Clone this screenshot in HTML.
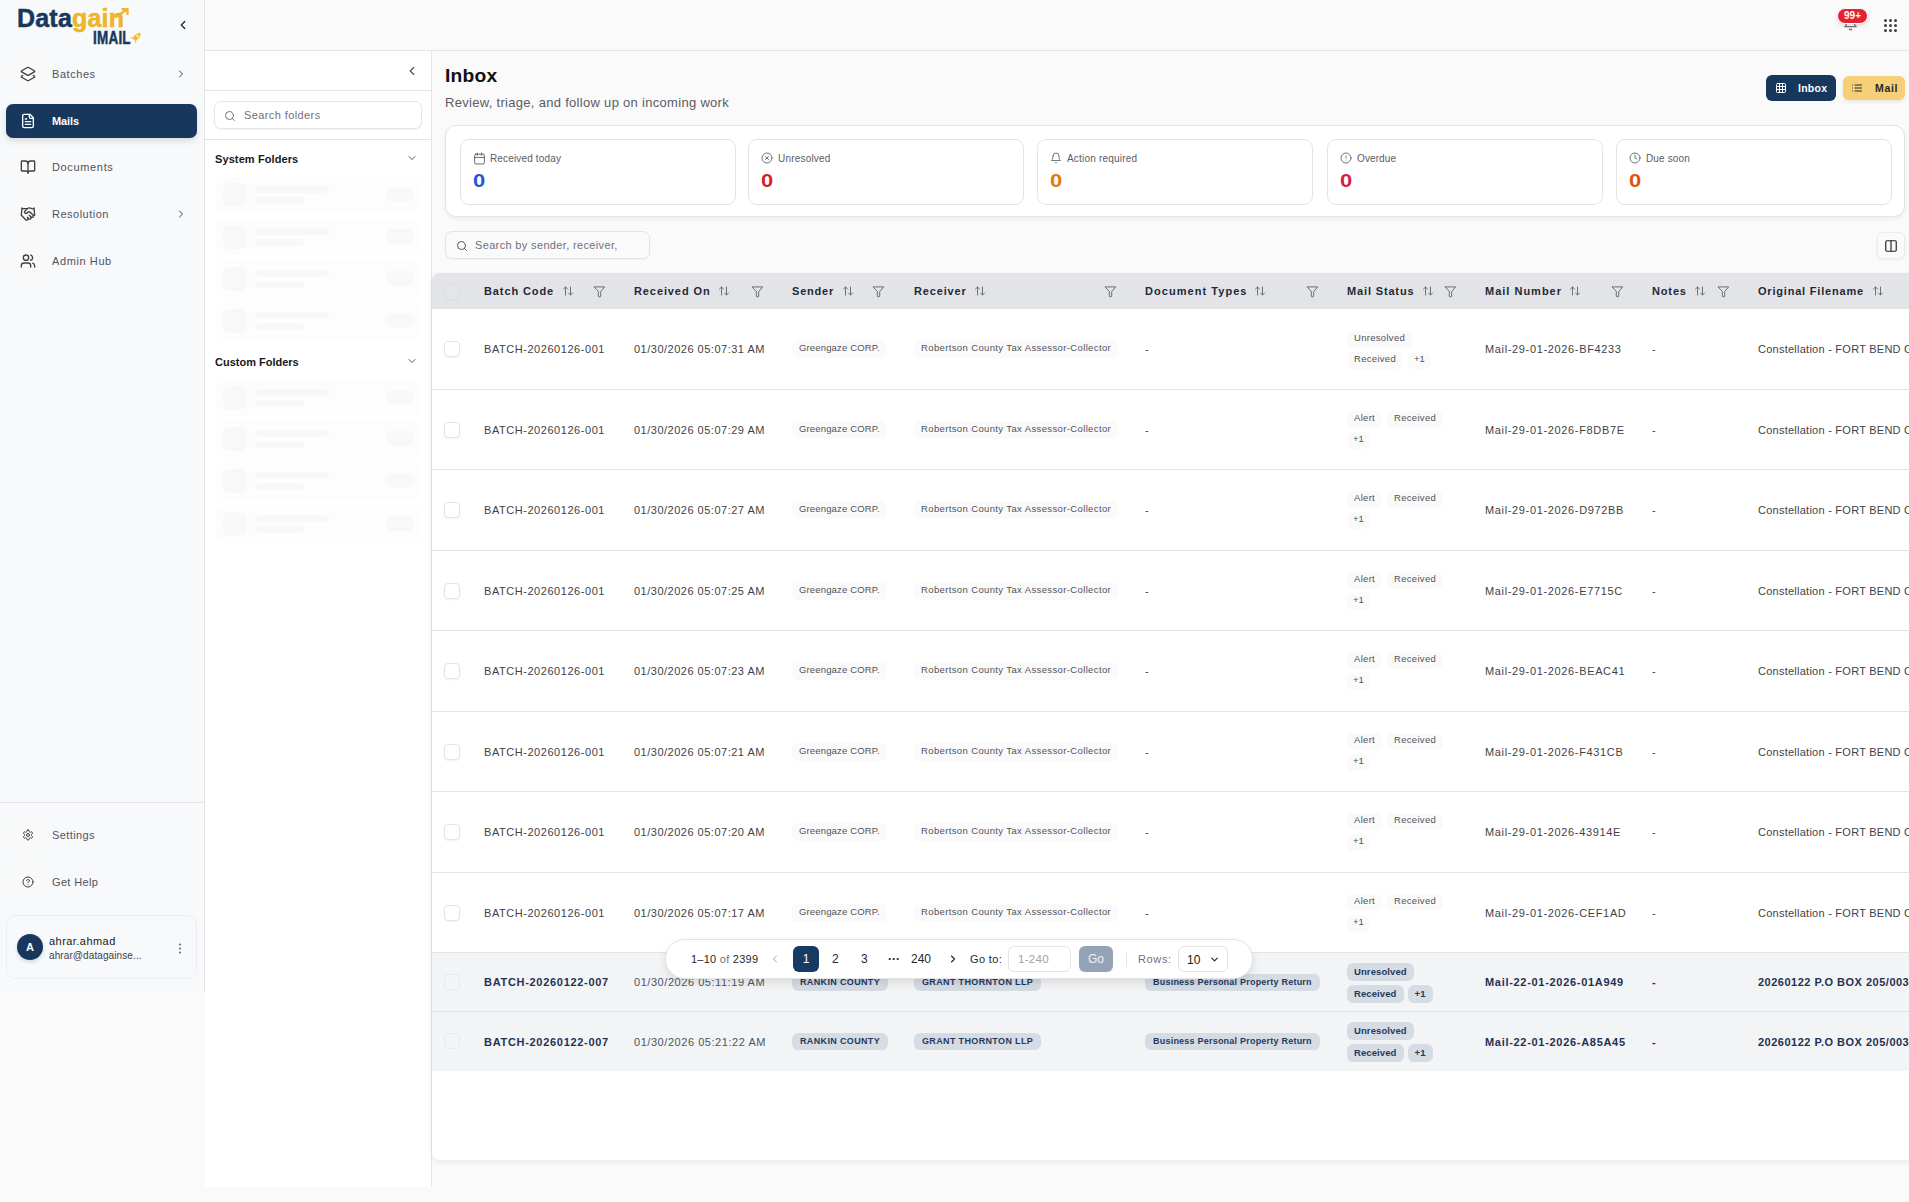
<!DOCTYPE html>
<html><head><meta charset="utf-8">
<style>
*{box-sizing:border-box;margin:0;padding:0}
html,body{width:1909px;height:1202px;overflow:hidden;background:#fafafa;font-family:"Liberation Sans",sans-serif;color:#111827}
.abs{position:absolute}
svg.i{fill:none;stroke:currentColor;stroke-width:2;stroke-linecap:round;stroke-linejoin:round;display:block}
/* sidebar */
#sb{position:absolute;left:0;top:0;width:205px;height:992px;background:#f8f9fb;border-right:1px solid #e4e4e7}
.nav{position:absolute;left:6px;width:191px;height:34px;border-radius:7px;color:#52525b;font-size:11px}
.nav .ic{position:absolute;left:8px;top:3px;width:28px;height:28px;border-radius:7px;background:#f9f9f7;color:#3f3f46}
.nav .ic svg{position:absolute;left:6px;top:6px}
.nav .t{position:absolute;left:46px;top:10px;line-height:14px}
.nav .chev{position:absolute;left:169px;top:11px;color:#3f3f46}
.nav.act{background:#17375c;color:#fff;box-shadow:0 3px 6px rgba(0,0,0,.12)}
.nav.act .ic{background:transparent;color:#fff}
.nav.act .t{font-weight:bold}
/* header */
#hdr{position:absolute;left:205px;top:0;width:1704px;height:51px;border-bottom:1px solid #e4e4e7;background:#fafafa}
/* folder panel */
#fp{position:absolute;left:205px;top:51px;width:227px;height:1136px;background:#fff;border-right:1px solid #e4e4e7}
.sk{position:absolute;left:10px;width:206px;height:36px;border-radius:9px;background:#fdfdfd}
.sk i{position:absolute;display:block;background:#f8f8f9}
.sk .a{left:8px;top:6px;width:24px;height:24px;border-radius:7px}
.sk .b{left:40px;top:9px;width:74px;height:7px;border-radius:4px}
.sk .c{left:40px;top:20px;width:49px;height:7px;border-radius:4px}
.sk .d{left:171px;top:10px;width:28px;height:15px;border-radius:8px}
/* stats */
.card{position:absolute;top:139px;width:276px;height:66px;border:1px solid #e4e4e7;border-radius:9px;background:#fff}
.card .lb{position:absolute;left:29px;top:13px;font-size:10px;color:#5b5b63;line-height:12px}
.card svg{position:absolute;left:12px;top:12px;color:#5b5b63;stroke-width:1.7}
.card .v{position:absolute;left:12px;top:30px;font-size:18px;font-weight:bold;line-height:22px;transform:scaleX(1.22);transform-origin:left}
/* table */
#tc{position:absolute;left:432px;top:273px;width:1600px;height:887px;background:#fff;border-radius:8px;box-shadow:0 2px 6px rgba(0,0,0,.08)}
#th{position:absolute;left:0;top:0;width:1600px;height:36px;background:#e3e4e7;border-radius:8px 8px 0 0}
.hc{position:absolute;top:0;height:36px}
.hc .t{position:absolute;left:16px;top:12px;font-size:11px;font-weight:bold;color:#1f2937;letter-spacing:.9px;line-height:13px;white-space:nowrap}
.hc svg{position:absolute;top:12px;color:#52525b}
.row{position:absolute;left:0;width:1600px;border-bottom:1px solid #e4e4e7}
.cell{position:absolute;top:0;height:100%;display:flex;align-items:center;font-size:11px;letter-spacing:.55px;color:#3f3f46;white-space:nowrap}
.cb{position:absolute;left:12px;width:16px;height:16px;border:1px solid #e4e4e7;border-radius:4px;background:#fff;box-shadow:0 1px 2px rgba(0,0,0,.06)}
.bg1{font-size:9.5px;letter-spacing:.25px;color:#52525b;background:#fafafa;border-radius:6px;padding:0 7px;height:18px;line-height:16px;display:inline-block}
.st{position:absolute;display:flex;flex-wrap:wrap;gap:4px 5px;width:110px;letter-spacing:.3px}
.bd{font-size:9.5px;color:#52525b;background:#fafafa;border-radius:6px;padding:0 7px;height:17px;line-height:14px}
.row.hl{background:#f3f4f6}
.hl .cb{background:transparent;box-shadow:none;border-color:#e8eaee}
.hl .cell{color:#4b5563}
.hl .nv{color:#1f3252;font-weight:bold}
.hl .cell{top:0}
.bg2{font-size:9px;letter-spacing:.35px;color:#1e3a5f;font-weight:bold;background:#d6dce4;border-radius:6px;padding:0 8px;height:17px;line-height:17px;display:inline-block}
.bd2{font-size:9.5px;letter-spacing:.1px;color:#1e3a5f;font-weight:bold;background:#d6dce4;border-radius:6px;padding:0 7px;height:18px;line-height:18px}
</style></head>
<body>
<!-- SIDEBAR -->
<div id="sb">
  <div class="abs" style="left:17px;top:5px;font-size:25px;font-weight:bold;letter-spacing:0.2px;line-height:26px;color:#17375c;-webkit-text-stroke:.5px #17375c">Data<span style="color:#f0b429;-webkit-text-stroke:.5px #f0b429">gain</span></div>
  <svg class="abs" style="left:112px;top:7px" width="18" height="12" viewBox="0 0 18 12"><path d="M3 10.5 L15 2.5 M9.5 2.2 H15.5 V8" fill="none" stroke="#f0b429" stroke-width="2.2" stroke-linecap="butt" stroke-linejoin="miter"/></svg>
  <svg class="abs" style="left:128px;top:30px" width="16" height="15" viewBox="0 0 16 15"><g transform="rotate(45 8 7.5)"><path d="M8 1 C10.5 3 10.8 7 10 10.5 H6 C5.2 7 5.5 3 8 1Z" fill="#f2b92e" stroke="#f8e3a6" stroke-width=".8"/><path d="M6 9 L4 12 L6.2 11.2Z M10 9 L12 12 L9.8 11.2Z" fill="#f2b92e"/><circle cx="8" cy="5.5" r="1.1" fill="#fff6d8"/></g></svg>
  <div class="abs" style="left:93px;top:30px;font-size:17.5px;font-weight:bold;line-height:17px;color:#17375c;transform:scaleX(.77);transform-origin:left;-webkit-text-stroke:.5px #17375c;letter-spacing:.3px">IMAIL</div>
  <svg class="i abs" style="left:176px;top:18px;color:#27272a;stroke-width:2.2" width="14" height="14" viewBox="0 0 24 24"><path d="m15 18-6-6 6-6"/></svg>

  <div class="nav" style="top:57px"><div class="ic"><svg class="i" width="16" height="16" viewBox="0 0 24 24"><path d="M13 13.74a2 2 0 0 1-2 0L2.5 8.87a1 1 0 0 1 0-1.74L11 2.26a2 2 0 0 1 2 0l8.5 4.87a1 1 0 0 1 0 1.74Z"/><path d="m20 14.285 1.5.845a1 1 0 0 1 0 1.74L13 21.74a2 2 0 0 1-2 0l-8.5-4.87a1 1 0 0 1 0-1.74l1.5-.845"/></svg></div><div class="t" style="letter-spacing:.55px">Batches</div><svg class="i chev" width="12" height="12" viewBox="0 0 24 24"><path d="m9 18 6-6-6-6"/></svg></div>
  <div class="nav act" style="top:104px"><div class="ic"><svg class="i" width="16" height="16" viewBox="0 0 24 24"><path d="M15 2H6a2 2 0 0 0-2 2v16a2 2 0 0 0 2 2h12a2 2 0 0 0 2-2V7Z"/><path d="M14 2v4a2 2 0 0 0 2 2h4"/><path d="M10 9H8"/><path d="M16 13H8"/><path d="M16 17H8"/></svg></div><div class="t" style="letter-spacing:-.1px">Mails</div></div>
  <div class="nav" style="top:150px"><div class="ic"><svg class="i" width="16" height="16" viewBox="0 0 24 24"><path d="M12 7v14"/><path d="M3 18a1 1 0 0 1-1-1V4a1 1 0 0 1 1-1h5a4 4 0 0 1 4 4 4 4 0 0 1 4-4h5a1 1 0 0 1 1 1v13a1 1 0 0 1-1 1h-6a3 3 0 0 0-3 3 3 3 0 0 0-3-3z"/></svg></div><div class="t" style="letter-spacing:.65px">Documents</div></div>
  <div class="nav" style="top:197px"><div class="ic"><svg class="i" width="16" height="16" viewBox="0 0 24 24"><path d="m11 17 2 2a1 1 0 1 0 3-3"/><path d="m14 14 2.5 2.5a1 1 0 1 0 3-3l-3.88-3.88a3 3 0 0 0-4.24 0l-.88.88a1 1 0 1 1-3-3l2.81-2.81a5.79 5.79 0 0 1 7.06-.87l.47.28a2 2 0 0 0 1.42.25L21 4"/><path d="m21 3 1 11h-2"/><path d="M3 3 2 14l6.5 6.5a1 1 0 1 0 3-3"/><path d="M3 4h8"/></svg></div><div class="t" style="letter-spacing:.5px">Resolution</div><svg class="i chev" width="12" height="12" viewBox="0 0 24 24"><path d="m9 18 6-6-6-6"/></svg></div>
  <div class="nav" style="top:244px"><div class="ic"><svg class="i" width="16" height="16" viewBox="0 0 24 24"><path d="M16 21v-2a4 4 0 0 0-4-4H6a4 4 0 0 0-4 4v2"/><circle cx="9" cy="7" r="4"/><path d="M22 21v-2a4 4 0 0 0-3-3.870"/><path d="M16 3.130a4 4 0 0 1 0 7.750"/></svg></div><div class="t" style="letter-spacing:.6px">Admin Hub</div></div>

  <div class="abs" style="left:0;top:802px;width:204px;height:1px;background:#e4e4e7"></div>
  <div class="nav" style="top:818px"><div class="ic"><svg class="i" width="12" height="12" viewBox="0 0 24 24" style="left:8px;top:8px"><path d="M12.22 2h-.44a2 2 0 0 0-2 2v.18a2 2 0 0 1-1 1.73l-.43.25a2 2 0 0 1-2 0l-.15-.08a2 2 0 0 0-2.73.73l-.22.38a2 2 0 0 0 .73 2.73l.15.1a2 2 0 0 1 1 1.72v.51a2 2 0 0 1-1 1.74l-.15.09a2 2 0 0 0-.73 2.73l.22.38a2 2 0 0 0 2.730.73l.15-.08a2 2 0 0 1 2 0l.43.25a2 2 0 0 1 1 1.73V20a2 2 0 0 0 2 2h.44a2 2 0 0 0 2-2v-.18a2 2 0 0 1 1-1.73l.43-.25a2 2 0 0 1 2 0l.15.08a2 2 0 0 0 2.73-.73l.22-.39a2 2 0 0 0-.73-2.73l-.15-.08a2 2 0 0 1-1-1.74v-.5a2 2 0 0 1 1-1.74l.15-.09a2 2 0 0 0 .73-2.73l-.22-.38a2 2 0 0 0-2.73-.73l-.15.08a2 2 0 0 1-2 0l-.43-.25a2 2 0 0 1-1-1.73V4a2 2 0 0 0-2-2z"/><circle cx="12" cy="12" r="3"/></svg></div><div class="t" style="letter-spacing:.4px">Settings</div></div>
  <div class="nav" style="top:865px"><div class="ic"><svg class="i" width="12" height="12" viewBox="0 0 24 24" style="left:8px;top:8px"><circle cx="12" cy="12" r="10"/><path d="M9.09 9a3 3 0 0 1 5.83 1c0 2-3 3-3 3"/><path d="M12 17h.01"/></svg></div><div class="t" style="letter-spacing:.35px">Get Help</div></div>

  <div class="abs" style="left:6px;top:915px;width:191px;height:64px;border:1px solid #eceef1;border-radius:9px;background:#f8f9fb">
    <div class="abs" style="left:10px;top:18px;width:26px;height:26px;border-radius:13px;background:#17375c;color:#fff;font-size:11px;font-weight:bold;text-align:center;line-height:26px;box-shadow:0 2px 4px rgba(0,0,0,.15)">A</div>
    <div class="abs" style="left:42px;top:19px;font-size:11px;letter-spacing:.45px;color:#18181b;line-height:13px">ahrar.ahmad</div>
    <div class="abs" style="left:42px;top:34px;font-size:10px;letter-spacing:.1px;color:#3f3f46;line-height:12px">ahrar@datagainse...</div>
    <svg class="abs" style="left:171px;top:27px" width="4" height="11" viewBox="0 0 4 11"><circle cx="2" cy="1.5" r="1.1" fill="#71717a"/><circle cx="2" cy="5.5" r="1.1" fill="#71717a"/><circle cx="2" cy="9.5" r="1.1" fill="#71717a"/></svg>
  </div>
</div>

<!-- HEADER -->
<div id="hdr"></div>
<svg class="i abs" style="left:1843px;top:16px;color:#71717a" width="15" height="15" viewBox="0 0 24 24"><path d="M6 8a6 6 0 0 1 12 0c0 7 3 9 3 9H3s3-2 3-9"/><path d="M10.3 21a1.94 1.94 0 0 0 3.4 0"/></svg>
<div class="abs" style="left:1837px;top:8px;width:31px;height:16px;border-radius:8px;background:#e5222f;border:1px solid #fafafa;color:#fff;font-size:10px;font-weight:bold;line-height:14px;text-align:center;box-shadow:0 2px 4px rgba(0,0,0,.12)">99+</div>
<svg class="abs" style="left:1884px;top:19px" width="13" height="13" viewBox="0 0 13 13"><g fill="#3f3f46"><circle cx="1.5" cy="1.5" r="1.5"/><circle cx="6.5" cy="1.5" r="1.5"/><circle cx="11.5" cy="1.5" r="1.5"/><circle cx="1.5" cy="6.5" r="1.5"/><circle cx="6.5" cy="6.5" r="1.5"/><circle cx="11.5" cy="6.5" r="1.5"/><circle cx="1.5" cy="11.5" r="1.5"/><circle cx="6.5" cy="11.5" r="1.5"/><circle cx="11.5" cy="11.5" r="1.5"/></g></svg>

<!-- FOLDER PANEL -->
<div id="fp">
  <svg class="i abs" style="left:200px;top:13px;color:#52525b" width="14" height="14" viewBox="0 0 24 24"><path d="m15 18-6-6 6-6"/></svg>
  <div class="abs" style="left:0;top:39px;width:226px;height:1px;background:#e4e4e7"></div>
  <div class="abs" style="left:9px;top:50px;width:208px;height:28px;border:1px solid #e4e4e7;border-radius:7px;background:#fff;box-shadow:0 1px 2px rgba(0,0,0,.05)">
    <svg class="i abs" style="left:9px;top:8px;color:#6b7280" width="12" height="12" viewBox="0 0 24 24"><circle cx="11" cy="11" r="8"/><path d="m21 21-4.3-4.3"/></svg>
    <div class="abs" style="left:29px;top:7px;font-size:11px;letter-spacing:.4px;color:#71717a;line-height:13px">Search folders</div>
  </div>
  <div class="abs" style="left:0;top:88px;width:226px;height:1px;background:#e4e4e7"></div>
  <div class="abs" style="left:10px;top:102px;font-size:11px;font-weight:bold;letter-spacing:.1px;color:#18181b;line-height:13px">System Folders</div>
  <svg class="i abs" style="left:201px;top:101px;color:#52525b" width="12" height="12" viewBox="0 0 24 24"><path d="m6 9 6 6 6-6"/></svg>
  <div class="sk" style="top:126px"><i class="a"></i><i class="b"></i><i class="c"></i><i class="d"></i></div>
  <div class="sk" style="top:168px"><i class="a"></i><i class="b"></i><i class="c"></i><i class="d"></i></div>
  <div class="sk" style="top:210px"><i class="a"></i><i class="b"></i><i class="c"></i><i class="d"></i></div>
  <div class="sk" style="top:252px"><i class="a"></i><i class="b"></i><i class="c"></i><i class="d"></i></div>
  <div class="abs" style="left:10px;top:305px;font-size:11px;font-weight:bold;color:#18181b;line-height:13px">Custom Folders</div>
  <svg class="i abs" style="left:201px;top:304px;color:#52525b" width="12" height="12" viewBox="0 0 24 24"><path d="m6 9 6 6 6-6"/></svg>
  <div class="sk" style="top:329px"><i class="a"></i><i class="b"></i><i class="c"></i><i class="d"></i></div>
  <div class="sk" style="top:370px"><i class="a"></i><i class="b"></i><i class="c"></i><i class="d"></i></div>
  <div class="sk" style="top:412px"><i class="a"></i><i class="b"></i><i class="c"></i><i class="d"></i></div>
  <div class="sk" style="top:455px"><i class="a"></i><i class="b"></i><i class="c"></i><i class="d"></i></div>
</div>

<!-- MAIN HEADER -->
<div class="abs" style="left:445px;top:65px;font-size:18px;font-weight:bold;letter-spacing:.2px;color:#111;line-height:22px;transform:scaleX(1.07);transform-origin:left">Inbox</div>
<div class="abs" style="left:445px;top:95px;font-size:13px;letter-spacing:.3px;color:#5b5b63;line-height:15px">Review, triage, and follow up on incoming work</div>

<div class="abs" style="left:1766px;top:75px;width:70px;height:26px;border-radius:6px;background:#17375c;color:#fff">
  <svg class="i abs" style="left:9px;top:7px" width="12" height="12" viewBox="0 0 24 24"><rect width="18" height="18" x="3" y="3" rx="2"/><path d="M3 9h18"/><path d="M3 15h18"/><path d="M9 3v18"/><path d="M15 3v18"/></svg>
  <div class="abs" style="left:32px;top:7px;font-size:10.5px;letter-spacing:.25px;font-weight:bold;line-height:13px">Inbox</div>
</div>
<div class="abs" style="left:1843px;top:76px;width:62px;height:24px;border-radius:6px;background:#f6cf76;color:#27272a;box-shadow:0 2px 4px rgba(0,0,0,.08)">
  <svg class="i abs" style="left:8px;top:6px" width="12" height="12" viewBox="0 0 24 24"><path d="M3 12h.01"/><path d="M3 18h.01"/><path d="M3 6h.01"/><path d="M8 12h13"/><path d="M8 18h13"/><path d="M8 6h13"/></svg>
  <div class="abs" style="left:32px;top:6px;font-size:10.5px;letter-spacing:.65px;font-weight:bold;line-height:13px">Mail</div>
</div>

<!-- STATS -->
<div class="abs" style="left:445px;top:125px;width:1460px;height:92px;background:#fff;border:1px solid #e4e4e7;border-radius:11px;box-shadow:0 2px 4px rgba(0,0,0,.05)"></div>
<div class="card" style="left:460px"><svg class="i" width="13" height="13" viewBox="0 0 24 24"><rect width="18" height="18" x="3" y="4" rx="2"/><path d="M16 2v4"/><path d="M8 2v4"/><path d="M3 10h18"/></svg><div class="lb" style="letter-spacing:.15px">Received today</div><div class="v" style="color:#2456d6">0</div></div>
<div class="card" style="left:748px"><svg class="i" width="12" height="12" viewBox="0 0 24 24"><circle cx="12" cy="12" r="10"/><path d="m15 9-6 6"/><path d="m9 9 6 6"/></svg><div class="lb" style="letter-spacing:.2px">Unresolved</div><div class="v" style="color:#d21f2a">0</div></div>
<div class="card" style="left:1037px"><svg class="i" width="12" height="12" viewBox="0 0 24 24"><path d="M6 8a6 6 0 0 1 12 0c0 7 3 9 3 9H3s3-2 3-9"/><path d="M10.3 21a1.94 1.94 0 0 0 3.4 0"/></svg><div class="lb" style="letter-spacing:.2px">Action required</div><div class="v" style="color:#dd7a0c">0</div></div>
<div class="card" style="left:1327px"><svg class="i" width="12" height="12" viewBox="0 0 24 24"><circle cx="12" cy="12" r="10"/><path d="M12 8v4"/><path d="M12 16h.01"/></svg><div class="lb" style="letter-spacing:.1px">Overdue</div><div class="v" style="color:#d21f45">0</div></div>
<div class="card" style="left:1616px"><svg class="i" width="12" height="12" viewBox="0 0 24 24"><circle cx="12" cy="12" r="10"/><path d="M12 6v6l4 2"/></svg><div class="lb" style="letter-spacing:.15px">Due soon</div><div class="v" style="color:#e0530e">0</div></div>

<!-- SEARCH -->
<div class="abs" style="left:445px;top:231px;width:205px;height:28px;border:1px solid #e4e4e7;border-radius:7px;background:#fafafa;box-shadow:0 1px 2px rgba(0,0,0,.04)">
  <svg class="i abs" style="left:10px;top:8px;color:#52525b" width="12" height="12" viewBox="0 0 24 24"><circle cx="11" cy="11" r="8"/><path d="m21 21-4.3-4.3"/></svg>
  <div class="abs" style="left:29px;top:7px;font-size:11px;letter-spacing:.35px;color:#71717a;line-height:13px">Search by sender, receiver,</div>
</div>
<div class="abs" style="left:1877px;top:232px;width:28px;height:27px;border:1px solid #ececec;border-radius:6px;background:#fafafa;box-shadow:0 1px 3px rgba(0,0,0,.06)">
  <svg class="i abs" style="left:6px;top:6px;color:#27272a" width="14" height="14" viewBox="0 0 24 24"><rect width="18" height="18" x="3" y="3" rx="2"/><path d="M12 3v18"/></svg>
</div>

<!-- TABLE -->
<div id="tc">
<div id="th"><div class="cb" style="top:11px;opacity:.35;border-color:#d4d4d8;background:#e4e7eb"></div><div class="hc" style="left:36px;width:150px"><div class="t" style="letter-spacing:0.9px">Batch Code</div></div><div class="hc" style="left:186px;width:158px"><div class="t" style="letter-spacing:0.9px">Received On</div></div><div class="hc" style="left:344px;width:122px"><div class="t" style="letter-spacing:0.8px">Sender</div></div><div class="hc" style="left:466px;width:231px"><div class="t" style="letter-spacing:0.85px">Receiver</div></div><div class="hc" style="left:697px;width:202px"><div class="t" style="letter-spacing:1.05px">Document Types</div></div><div class="hc" style="left:899px;width:138px"><div class="t" style="letter-spacing:0.85px">Mail Status</div></div><div class="hc" style="left:1037px;width:167px"><div class="t" style="letter-spacing:1.0px">Mail Number</div></div><div class="hc" style="left:1204px;width:106px"><div class="t" style="letter-spacing:0.85px">Notes</div></div><div class="hc" style="left:1310px;width:390px"><div class="t" style="letter-spacing:0.8px">Original Filename</div></div><svg class="i" width="12" height="12" viewBox="0 0 24 24" style="position:absolute;top:12px;color:#63636b;left:130px;stroke-width:1.8"><path d="m21 16-4 4-4-4"/><path d="M17 20V4"/><path d="m3 8 4-4 4 4"/><path d="M7 4v16"/></svg><svg class="i" width="12" height="12" viewBox="0 0 24 24" style="position:absolute;top:12px;color:#63636b;left:286px;stroke-width:1.8"><path d="m21 16-4 4-4-4"/><path d="M17 20V4"/><path d="m3 8 4-4 4 4"/><path d="M7 4v16"/></svg><svg class="i" width="12" height="12" viewBox="0 0 24 24" style="position:absolute;top:12px;color:#63636b;left:410px;stroke-width:1.8"><path d="m21 16-4 4-4-4"/><path d="M17 20V4"/><path d="m3 8 4-4 4 4"/><path d="M7 4v16"/></svg><svg class="i" width="12" height="12" viewBox="0 0 24 24" style="position:absolute;top:12px;color:#63636b;left:542px;stroke-width:1.8"><path d="m21 16-4 4-4-4"/><path d="M17 20V4"/><path d="m3 8 4-4 4 4"/><path d="M7 4v16"/></svg><svg class="i" width="12" height="12" viewBox="0 0 24 24" style="position:absolute;top:12px;color:#63636b;left:822px;stroke-width:1.8"><path d="m21 16-4 4-4-4"/><path d="M17 20V4"/><path d="m3 8 4-4 4 4"/><path d="M7 4v16"/></svg><svg class="i" width="12" height="12" viewBox="0 0 24 24" style="position:absolute;top:12px;color:#63636b;left:990px;stroke-width:1.8"><path d="m21 16-4 4-4-4"/><path d="M17 20V4"/><path d="m3 8 4-4 4 4"/><path d="M7 4v16"/></svg><svg class="i" width="12" height="12" viewBox="0 0 24 24" style="position:absolute;top:12px;color:#63636b;left:1137px;stroke-width:1.8"><path d="m21 16-4 4-4-4"/><path d="M17 20V4"/><path d="m3 8 4-4 4 4"/><path d="M7 4v16"/></svg><svg class="i" width="12" height="12" viewBox="0 0 24 24" style="position:absolute;top:12px;color:#63636b;left:1262px;stroke-width:1.8"><path d="m21 16-4 4-4-4"/><path d="M17 20V4"/><path d="m3 8 4-4 4 4"/><path d="M7 4v16"/></svg><svg class="i" width="12" height="12" viewBox="0 0 24 24" style="position:absolute;top:12px;color:#63636b;left:1440px;stroke-width:1.8"><path d="m21 16-4 4-4-4"/><path d="M17 20V4"/><path d="m3 8 4-4 4 4"/><path d="M7 4v16"/></svg><svg class="i" width="13" height="13" viewBox="0 0 24 24" style="position:absolute;top:12px;color:#63636b;left:161px;stroke-width:1.7"><path d="M2.5 3.5h19l-7.3 8.8v8.2a1.2 1.2 0 0 1-1.2 1.2h-2a1.2 1.2 0 0 1-1.2-1.2v-8.2z"/></svg><svg class="i" width="13" height="13" viewBox="0 0 24 24" style="position:absolute;top:12px;color:#63636b;left:319px;stroke-width:1.7"><path d="M2.5 3.5h19l-7.3 8.8v8.2a1.2 1.2 0 0 1-1.2 1.2h-2a1.2 1.2 0 0 1-1.2-1.2v-8.2z"/></svg><svg class="i" width="13" height="13" viewBox="0 0 24 24" style="position:absolute;top:12px;color:#63636b;left:440px;stroke-width:1.7"><path d="M2.5 3.5h19l-7.3 8.8v8.2a1.2 1.2 0 0 1-1.2 1.2h-2a1.2 1.2 0 0 1-1.2-1.2v-8.2z"/></svg><svg class="i" width="13" height="13" viewBox="0 0 24 24" style="position:absolute;top:12px;color:#63636b;left:672px;stroke-width:1.7"><path d="M2.5 3.5h19l-7.3 8.8v8.2a1.2 1.2 0 0 1-1.2 1.2h-2a1.2 1.2 0 0 1-1.2-1.2v-8.2z"/></svg><svg class="i" width="13" height="13" viewBox="0 0 24 24" style="position:absolute;top:12px;color:#63636b;left:874px;stroke-width:1.7"><path d="M2.5 3.5h19l-7.3 8.8v8.2a1.2 1.2 0 0 1-1.2 1.2h-2a1.2 1.2 0 0 1-1.2-1.2v-8.2z"/></svg><svg class="i" width="13" height="13" viewBox="0 0 24 24" style="position:absolute;top:12px;color:#63636b;left:1012px;stroke-width:1.7"><path d="M2.5 3.5h19l-7.3 8.8v8.2a1.2 1.2 0 0 1-1.2 1.2h-2a1.2 1.2 0 0 1-1.2-1.2v-8.2z"/></svg><svg class="i" width="13" height="13" viewBox="0 0 24 24" style="position:absolute;top:12px;color:#63636b;left:1179px;stroke-width:1.7"><path d="M2.5 3.5h19l-7.3 8.8v8.2a1.2 1.2 0 0 1-1.2 1.2h-2a1.2 1.2 0 0 1-1.2-1.2v-8.2z"/></svg><svg class="i" width="13" height="13" viewBox="0 0 24 24" style="position:absolute;top:12px;color:#63636b;left:1285px;stroke-width:1.7"><path d="M2.5 3.5h19l-7.3 8.8v8.2a1.2 1.2 0 0 1-1.2 1.2h-2a1.2 1.2 0 0 1-1.2-1.2v-8.2z"/></svg></div>
<div class="row" style="top:36px;height:81px"><div class="cb" style="top:32px"></div><div class="cell" style="left:52px;">BATCH-20260126-001</div><div class="cell" style="left:202px;letter-spacing:.5px">01/30/2026 05:07:31 AM</div><div class="cell" style="left:360px;"><span class="bg1" style="letter-spacing:.15px">Greengaze CORP.</span></div><div class="cell" style="left:482px;"><span class="bg1" style="letter-spacing:.37px">Robertson County Tax Assessor-Collector</span></div><div class="cell" style="left:713px;">-</div><div class="st" style="left:915px;top:22px;width:90px"><span class="bd">Unresolved</span><span class="bd">Received</span><span class="bd" style="padding:0 6px;letter-spacing:0">+1</span></div><div class="cell" style="left:1053px;letter-spacing:.65px">Mail-29-01-2026-BF4233</div><div class="cell" style="left:1220px;">-</div><div class="cell" style="left:1326px;letter-spacing:.25px">Constellation - FORT BEND COUNTY TAX OFFICE</div></div>
<div class="row" style="top:117px;height:80px"><div class="cb" style="top:32px"></div><div class="cell" style="left:52px;">BATCH-20260126-001</div><div class="cell" style="left:202px;letter-spacing:.5px">01/30/2026 05:07:29 AM</div><div class="cell" style="left:360px;"><span class="bg1" style="letter-spacing:.15px">Greengaze CORP.</span></div><div class="cell" style="left:482px;"><span class="bg1" style="letter-spacing:.37px">Robertson County Tax Assessor-Collector</span></div><div class="cell" style="left:713px;">-</div><div class="st" style="left:915px;top:21px;width:110px"><span class="bd">Alert</span><span class="bd">Received</span><span class="bd" style="padding:0 6px;letter-spacing:0">+1</span></div><div class="cell" style="left:1053px;letter-spacing:.65px">Mail-29-01-2026-F8DB7E</div><div class="cell" style="left:1220px;">-</div><div class="cell" style="left:1326px;letter-spacing:.25px">Constellation - FORT BEND COUNTY TAX OFFICE</div></div>
<div class="row" style="top:197px;height:81px"><div class="cb" style="top:32px"></div><div class="cell" style="left:52px;">BATCH-20260126-001</div><div class="cell" style="left:202px;letter-spacing:.5px">01/30/2026 05:07:27 AM</div><div class="cell" style="left:360px;"><span class="bg1" style="letter-spacing:.15px">Greengaze CORP.</span></div><div class="cell" style="left:482px;"><span class="bg1" style="letter-spacing:.37px">Robertson County Tax Assessor-Collector</span></div><div class="cell" style="left:713px;">-</div><div class="st" style="left:915px;top:21px;width:110px"><span class="bd">Alert</span><span class="bd">Received</span><span class="bd" style="padding:0 6px;letter-spacing:0">+1</span></div><div class="cell" style="left:1053px;letter-spacing:.65px">Mail-29-01-2026-D972BB</div><div class="cell" style="left:1220px;">-</div><div class="cell" style="left:1326px;letter-spacing:.25px">Constellation - FORT BEND COUNTY TAX OFFICE</div></div>
<div class="row" style="top:278px;height:80px"><div class="cb" style="top:32px"></div><div class="cell" style="left:52px;">BATCH-20260126-001</div><div class="cell" style="left:202px;letter-spacing:.5px">01/30/2026 05:07:25 AM</div><div class="cell" style="left:360px;"><span class="bg1" style="letter-spacing:.15px">Greengaze CORP.</span></div><div class="cell" style="left:482px;"><span class="bg1" style="letter-spacing:.37px">Robertson County Tax Assessor-Collector</span></div><div class="cell" style="left:713px;">-</div><div class="st" style="left:915px;top:21px;width:110px"><span class="bd">Alert</span><span class="bd">Received</span><span class="bd" style="padding:0 6px;letter-spacing:0">+1</span></div><div class="cell" style="left:1053px;letter-spacing:.65px">Mail-29-01-2026-E7715C</div><div class="cell" style="left:1220px;">-</div><div class="cell" style="left:1326px;letter-spacing:.25px">Constellation - FORT BEND COUNTY TAX OFFICE</div></div>
<div class="row" style="top:358px;height:81px"><div class="cb" style="top:32px"></div><div class="cell" style="left:52px;">BATCH-20260126-001</div><div class="cell" style="left:202px;letter-spacing:.5px">01/30/2026 05:07:23 AM</div><div class="cell" style="left:360px;"><span class="bg1" style="letter-spacing:.15px">Greengaze CORP.</span></div><div class="cell" style="left:482px;"><span class="bg1" style="letter-spacing:.37px">Robertson County Tax Assessor-Collector</span></div><div class="cell" style="left:713px;">-</div><div class="st" style="left:915px;top:21px;width:110px"><span class="bd">Alert</span><span class="bd">Received</span><span class="bd" style="padding:0 6px;letter-spacing:0">+1</span></div><div class="cell" style="left:1053px;letter-spacing:.65px">Mail-29-01-2026-BEAC41</div><div class="cell" style="left:1220px;">-</div><div class="cell" style="left:1326px;letter-spacing:.25px">Constellation - FORT BEND COUNTY TAX OFFICE</div></div>
<div class="row" style="top:439px;height:80px"><div class="cb" style="top:32px"></div><div class="cell" style="left:52px;">BATCH-20260126-001</div><div class="cell" style="left:202px;letter-spacing:.5px">01/30/2026 05:07:21 AM</div><div class="cell" style="left:360px;"><span class="bg1" style="letter-spacing:.15px">Greengaze CORP.</span></div><div class="cell" style="left:482px;"><span class="bg1" style="letter-spacing:.37px">Robertson County Tax Assessor-Collector</span></div><div class="cell" style="left:713px;">-</div><div class="st" style="left:915px;top:21px;width:110px"><span class="bd">Alert</span><span class="bd">Received</span><span class="bd" style="padding:0 6px;letter-spacing:0">+1</span></div><div class="cell" style="left:1053px;letter-spacing:.65px">Mail-29-01-2026-F431CB</div><div class="cell" style="left:1220px;">-</div><div class="cell" style="left:1326px;letter-spacing:.25px">Constellation - FORT BEND COUNTY TAX OFFICE</div></div>
<div class="row" style="top:519px;height:81px"><div class="cb" style="top:32px"></div><div class="cell" style="left:52px;">BATCH-20260126-001</div><div class="cell" style="left:202px;letter-spacing:.5px">01/30/2026 05:07:20 AM</div><div class="cell" style="left:360px;"><span class="bg1" style="letter-spacing:.15px">Greengaze CORP.</span></div><div class="cell" style="left:482px;"><span class="bg1" style="letter-spacing:.37px">Robertson County Tax Assessor-Collector</span></div><div class="cell" style="left:713px;">-</div><div class="st" style="left:915px;top:21px;width:110px"><span class="bd">Alert</span><span class="bd">Received</span><span class="bd" style="padding:0 6px;letter-spacing:0">+1</span></div><div class="cell" style="left:1053px;letter-spacing:.65px">Mail-29-01-2026-43914E</div><div class="cell" style="left:1220px;">-</div><div class="cell" style="left:1326px;letter-spacing:.25px">Constellation - FORT BEND COUNTY TAX OFFICE</div></div>
<div class="row" style="top:600px;height:80px"><div class="cb" style="top:32px"></div><div class="cell" style="left:52px;">BATCH-20260126-001</div><div class="cell" style="left:202px;letter-spacing:.5px">01/30/2026 05:07:17 AM</div><div class="cell" style="left:360px;"><span class="bg1" style="letter-spacing:.15px">Greengaze CORP.</span></div><div class="cell" style="left:482px;"><span class="bg1" style="letter-spacing:.37px">Robertson County Tax Assessor-Collector</span></div><div class="cell" style="left:713px;">-</div><div class="st" style="left:915px;top:21px;width:110px"><span class="bd">Alert</span><span class="bd">Received</span><span class="bd" style="padding:0 6px;letter-spacing:0">+1</span></div><div class="cell" style="left:1053px;letter-spacing:.65px">Mail-29-01-2026-CEF1AD</div><div class="cell" style="left:1220px;">-</div><div class="cell" style="left:1326px;letter-spacing:.25px">Constellation - FORT BEND COUNTY TAX OFFICE</div></div>
<div class="row hl" style="top:680px;height:59px"><div class="cb" style="top:21px"></div><div class="cell nv" style="left:52px;letter-spacing:.7px">BATCH-20260122-007</div><div class="cell" style="left:202px;">01/30/2026 05:11:19 AM</div><div class="cell" style="left:360px;"><span class="bg2">RANKIN COUNTY</span></div><div class="cell" style="left:482px;"><span class="bg2">GRANT THORNTON LLP</span></div><div class="cell" style="left:713px;"><span class="bg2" style="letter-spacing:.22px">Business Personal Property Return</span></div><div class="st" style="left:915px;top:10px;width:90px;gap:4px 4px"><span class="bd2">Unresolved</span><span class="bd2">Received</span><span class="bd2">+1</span></div><div class="cell nv" style="left:1053px;letter-spacing:.7px">Mail-22-01-2026-01A949</div><div class="cell nv" style="left:1220px;">-</div><div class="cell nv" style="left:1326px;letter-spacing:.5px">20260122 P.O BOX 205/003 RANKIN COUNTY</div></div>
<div class="row hl" style="top:739px;height:59px;border-bottom:0"><div class="cb" style="top:21px"></div><div class="cell nv" style="left:52px;letter-spacing:.7px">BATCH-20260122-007</div><div class="cell" style="left:202px;">01/30/2026 05:21:22 AM</div><div class="cell" style="left:360px;"><span class="bg2">RANKIN COUNTY</span></div><div class="cell" style="left:482px;"><span class="bg2">GRANT THORNTON LLP</span></div><div class="cell" style="left:713px;"><span class="bg2" style="letter-spacing:.22px">Business Personal Property Return</span></div><div class="st" style="left:915px;top:10px;width:90px;gap:4px 4px"><span class="bd2">Unresolved</span><span class="bd2">Received</span><span class="bd2">+1</span></div><div class="cell nv" style="left:1053px;letter-spacing:.7px">Mail-22-01-2026-A85A45</div><div class="cell nv" style="left:1220px;">-</div><div class="cell nv" style="left:1326px;letter-spacing:.5px">20260122 P.O BOX 205/003 RANKIN COUNTY</div></div>
</div>

<div class="abs" style="left:665px;top:939px;width:588px;height:40px;border-radius:20px;background:#fff;border:1px solid #e4e4e7;box-shadow:0 4px 10px rgba(0,0,0,.10)">
<div class="abs" style="left:25px;top:12px;font-size:11px;letter-spacing:.25px;color:#27272a;line-height:14px;white-space:nowrap">1–10 <span style="color:#71717a">of</span> 2399</div>
<svg class="i abs" style="left:103px;top:13px;color:#9ca3af" width="12" height="12" viewBox="0 0 24 24"><path d="m15 18-6-6 6-6"/></svg>
<div class="abs" style="left:127px;top:6px;width:26px;height:26px;border-radius:6px;background:#163a63;color:#fff;font-size:12px;line-height:26px;text-align:center">1</div>
<div class="abs" style="left:166px;top:12px;font-size:12px;color:#27272a;line-height:14px">2</div>
<div class="abs" style="left:195px;top:12px;font-size:12px;color:#27272a;line-height:14px">3</div>
<div class="abs" style="left:222px;top:12px;font-size:12px;color:#27272a;line-height:14px;font-weight:bold">···</div>
<div class="abs" style="left:245px;top:12px;font-size:12px;color:#27272a;line-height:14px">240</div>
<svg class="i abs" style="left:281px;top:13px;color:#27272a;stroke-width:2.3" width="12" height="12" viewBox="0 0 24 24"><path d="m9 18 6-6-6-6"/></svg>
<div class="abs" style="left:304px;top:12px;font-size:11px;letter-spacing:.35px;color:#27272a;line-height:14px">Go to:</div>
<div class="abs" style="left:342px;top:6px;width:63px;height:26px;border:1px solid #e4e4e7;border-radius:6px;background:#fff"><div class="abs" style="left:9px;top:5px;font-size:11.5px;color:#a1a1aa;line-height:14px;letter-spacing:.3px">1-240</div></div>
<div class="abs" style="left:413px;top:6px;width:34px;height:26px;border-radius:6px;background:#94a3b8;color:#eef2f6;font-size:12px;line-height:26px;text-align:center">Go</div>
<div class="abs" style="left:460px;top:12px;width:1px;height:15px;background:#e4e4e7"></div>
<div class="abs" style="left:472px;top:12px;font-size:11px;letter-spacing:.65px;color:#71717a;line-height:14px">Rows:</div>
<div class="abs" style="left:512px;top:6px;width:50px;height:26px;border:1px solid #e4e4e7;border-radius:6px;background:#fff"><div class="abs" style="left:8px;top:6px;font-size:12px;color:#18181b;line-height:14px">10</div><svg class="i abs" style="left:30px;top:7px;color:#27272a;stroke-width:2.6" width="11" height="11" viewBox="0 0 24 24"><path d="m6 9 6 6 6-6"/></svg></div>
</div>
</body></html>
